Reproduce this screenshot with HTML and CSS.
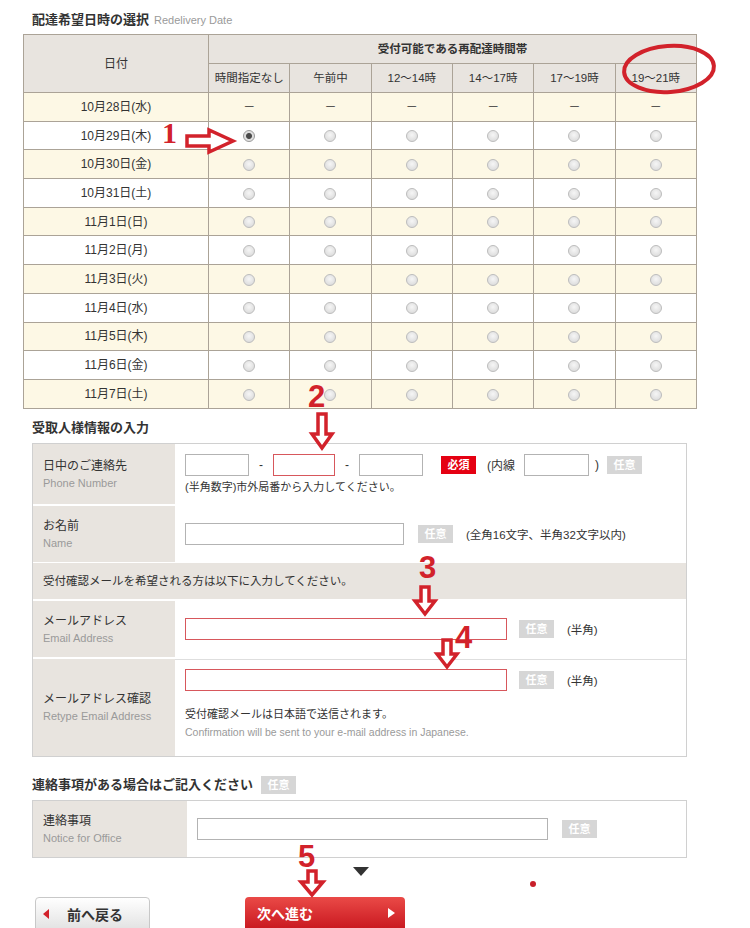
FILE: index.html
```html
<!DOCTYPE html>
<html lang="ja">
  <head>
    <meta charset="UTF-8" />
    <title>再配達受付 | 配達希望日時の選択</title>
    <link rel="stylesheet" href="styles.css">
  </head>
  <body>
    <main class="page">
      <h2 class="sec-title">配達希望日時の選択 <span class="sec-sub">Redelivery Date</span></h2>

      <table class="slots">
        <thead>
          <tr>
            <th rowspan="2" class="col-date">日付</th>
            <th colspan="6" class="slots-caption">受付可能である再配達時間帯</th>
          </tr>
          <tr>
            <th>時間指定なし</th>
            <th>午前中</th>
            <th>12～14時</th>
            <th>14～17時</th>
            <th>17～19時</th>
            <th>19～21時</th>
          </tr>
        </thead>
        <tbody>
          <tr>
            <td>10月28日(水)</td>
            <td>－</td><td>－</td><td>－</td><td>－</td><td>－</td><td>－</td>
          </tr>
          <tr>
            <td>10月29日(木)</td>
            <td><span class="radio is-checked"></span></td><td><span class="radio"></span></td><td><span class="radio"></span></td><td><span class="radio"></span></td><td><span class="radio"></span></td><td><span class="radio"></span></td>
          </tr>
          <tr>
            <td>10月30日(金)</td>
            <td><span class="radio"></span></td><td><span class="radio"></span></td><td><span class="radio"></span></td><td><span class="radio"></span></td><td><span class="radio"></span></td><td><span class="radio"></span></td>
          </tr>
          <tr>
            <td>10月31日(土)</td>
            <td><span class="radio"></span></td><td><span class="radio"></span></td><td><span class="radio"></span></td><td><span class="radio"></span></td><td><span class="radio"></span></td><td><span class="radio"></span></td>
          </tr>
          <tr>
            <td>11月1日(日)</td>
            <td><span class="radio"></span></td><td><span class="radio"></span></td><td><span class="radio"></span></td><td><span class="radio"></span></td><td><span class="radio"></span></td><td><span class="radio"></span></td>
          </tr>
          <tr>
            <td>11月2日(月)</td>
            <td><span class="radio"></span></td><td><span class="radio"></span></td><td><span class="radio"></span></td><td><span class="radio"></span></td><td><span class="radio"></span></td><td><span class="radio"></span></td>
          </tr>
          <tr>
            <td>11月3日(火)</td>
            <td><span class="radio"></span></td><td><span class="radio"></span></td><td><span class="radio"></span></td><td><span class="radio"></span></td><td><span class="radio"></span></td><td><span class="radio"></span></td>
          </tr>
          <tr>
            <td>11月4日(水)</td>
            <td><span class="radio"></span></td><td><span class="radio"></span></td><td><span class="radio"></span></td><td><span class="radio"></span></td><td><span class="radio"></span></td><td><span class="radio"></span></td>
          </tr>
          <tr>
            <td>11月5日(木)</td>
            <td><span class="radio"></span></td><td><span class="radio"></span></td><td><span class="radio"></span></td><td><span class="radio"></span></td><td><span class="radio"></span></td><td><span class="radio"></span></td>
          </tr>
          <tr>
            <td>11月6日(金)</td>
            <td><span class="radio"></span></td><td><span class="radio"></span></td><td><span class="radio"></span></td><td><span class="radio"></span></td><td><span class="radio"></span></td><td><span class="radio"></span></td>
          </tr>
          <tr>
            <td>11月7日(土)</td>
            <td><span class="radio"></span></td><td><span class="radio"></span></td><td><span class="radio"></span></td><td><span class="radio"></span></td><td><span class="radio"></span></td><td><span class="radio"></span></td>
          </tr>
        </tbody>
      </table>

      <h2 class="sec-title sec-title--form">受取人様情報の入力</h2>
      <section class="form-box">
        <div class="row row--phone">
          <div class="label">
            <p class="label-ja">日中のご連絡先</p>
            <p class="label-en">Phone Number</p>
          </div>
          <div class="field">
            <div class="line">
              <input class="txt tel-1" type="text" />
              <span class="sep">-</span>
              <input class="txt txt--alert tel-2" type="text" />
              <span class="sep">-</span>
              <input class="txt tel-3" type="text" />
              <span class="badge badge--req">必須</span>
              <span class="ext">(内線</span>
              <input class="txt tel-ext" type="text" />
              <span class="paren">)</span>
              <span class="badge badge--opt">任意</span>
            </div>
            <p class="note">(半角数字)市外局番から入力してください。</p>
          </div>
        </div>

        <div class="row row--name">
          <div class="label">
            <p class="label-ja">お名前</p>
            <p class="label-en">Name</p>
          </div>
          <div class="field">
            <div class="line">
              <input class="txt name" type="text" />
              <span class="badge badge--opt">任意</span>
              <span class="hint">(全角16文字、半角32文字以内)</span>
            </div>
          </div>
        </div>

        <div class="row-notice">受付確認メールを希望される方は以下に入力してください。</div>

        <div class="row row--mail">
          <div class="label">
            <p class="label-ja">メールアドレス</p>
            <p class="label-en">Email Address</p>
          </div>
          <div class="field">
            <div class="line">
              <input class="txt txt--alert mail" type="text" />
              <span class="badge badge--opt">任意</span>
              <span class="hint">(半角)</span>
            </div>
          </div>
        </div>

        <div class="row row--retype">
          <div class="label">
            <p class="label-ja">メールアドレス確認</p>
            <p class="label-en">Retype Email Address</p>
          </div>
          <div class="field field--top">
            <div class="line">
              <input class="txt txt--alert mail" type="text" />
              <span class="badge badge--opt">任意</span>
              <span class="hint">(半角)</span>
            </div>
            <p class="mail-note">受付確認メールは日本語で送信されます。</p>
            <p class="mail-note-en">Confirmation will be sent to your e-mail address in Japanese.</p>
          </div>
        </div>
      </section>

      <h2 class="sec-title sec-title--notice">連絡事項がある場合はご記入ください <span class="badge badge--opt">任意</span></h2>
      <section class="form-box form-box--notice">
        <div class="row">
          <div class="label">
            <p class="label-ja">連絡事項</p>
            <p class="label-en">Notice for Office</p>
          </div>
          <div class="field">
            <div class="line">
              <input class="txt office" type="text" />
              <span class="badge badge--opt">任意</span>
            </div>
          </div>
        </div>
      </section>

      <div class="down-hint"><span class="tri-down"></span></div>

      <nav class="nav">
        <a class="btn btn--back" href="#"><span class="tri-left"></span>前へ戻る</a>
        <a class="btn btn--next" href="#">次へ進む<span class="tri-right"></span></a>
      </nav>

      <!-- annotations drawn over the page -->
      <svg class="mark mark--circle" width="100" height="58" viewBox="0 0 100 58">
        <ellipse cx="50" cy="29" rx="45" ry="23" transform="rotate(-4 50 29)" fill="none" stroke="#d2222b" stroke-width="4" />
      </svg>

      <span class="step step--1">1</span>
      <svg class="mark mark--right" width="50" height="26" viewBox="0 0 50 26">
        <path d="M2 8 H24 V2 L48 13 L24 24 V18 H2 Z" fill="#fff" stroke="#d2222b" stroke-width="3.5" stroke-linejoin="miter" />
      </svg>

      <span class="step step--2">2</span>
      <svg class="mark mark--down2" width="24" height="38" viewBox="0 0 24 38" preserveAspectRatio="none">
        <path d="M8 2 H16 V22 H22 L12 36 L2 22 H8 Z" fill="#fff" stroke="#d2222b" stroke-width="3.5" />
      </svg>

      <span class="step step--3">3</span>
      <svg class="mark mark--down3" width="24" height="31" viewBox="0 0 24 31" preserveAspectRatio="none">
        <path d="M8 2 H16 V16 H22 L12 29 L2 16 H8 Z" fill="#fff" stroke="#d2222b" stroke-width="3.5" />
      </svg>

      <span class="step step--4">4</span>
      <svg class="mark mark--down4" width="24" height="31" viewBox="0 0 24 31" preserveAspectRatio="none">
        <path d="M8 2 H16 V16 H22 L12 29 L2 16 H8 Z" fill="#fff" stroke="#d2222b" stroke-width="3.5" />
      </svg>

      <span class="step step--5">5</span>
      <svg class="mark mark--down5" width="28" height="28" viewBox="0 0 28 28" preserveAspectRatio="none">
        <path d="M10 2 H18 V13 H25 L14 26 L3 13 H10 Z" fill="#fff" stroke="#d2222b" stroke-width="3.5" />
      </svg>

      <span class="stray-dot"></span>
    </main>
  </body>
</html>
```

FILE: styles.css
```css
body {
  margin: 0;
  font-family: "Liberation Sans", "Noto Sans CJK JP", sans-serif;
  font-size: 12px;
  color: #333;
  background: #fff;
}

p {
  margin: 0;
}

.page {
  position: relative;
  width: 750px;
  padding-top: 12px;
}

.sec-title {
  display: flex;
  align-items: center;
  margin: 0 0 0 32px;
  font-size: 13px;
  line-height: 16px;
  font-weight: bold;
  color: #333;
}

.sec-sub {
  margin-left: 5px;
  font-size: 11px;
  font-weight: normal;
  color: #9a9a9a;
}

.sec-title--form {
  margin-top: 11px;
}

.sec-title--notice {
  margin-top: 19px;
}

.sec-title--notice .badge {
  margin-left: 8px;
}

/* delivery slots */

.slots {
  margin: 6px 0 0 23px;
  width: 674px;
  border-collapse: collapse;
  table-layout: fixed;
}

.slots th,
.slots td {
  height: 27.7px;
  padding: 0;
  border: 1px solid #aba397;
  text-align: center;
  font-size: 11.5px;
  font-weight: normal;
  line-height: 14px;
  color: #333;
}

.slots th {
  height: 28px;
  background: #e8e4df;
}

.slots .col-date {
  width: 184px;
  font-size: 12px;
}

.slots .slots-caption {
  font-weight: bold;
}

.slots td {
  background: #fff;
  font-size: 12px;
}

.slots tbody tr:nth-child(odd) td {
  background: #fdf8e5;
}

.radio {
  display: inline-block;
  width: 10px;
  height: 10px;
  border: 1px solid #bdbdbd;
  border-radius: 50%;
  background: radial-gradient(circle at 50% 40%, #f6f6f6, #d6d6d6);
  vertical-align: middle;
}

.radio.is-checked {
  background: radial-gradient(circle, #4a4a4a 0 2.5px, #dcdcdc 3.5px, #eeeeee);
  border-color: #9a9a9a;
}

/* form boxes */

.form-box {
  box-sizing: border-box;
  width: 655px;
  margin: 7px 0 0 32px;
  border: 1px solid #d0d0d0;
  background: #fff;
}

.row {
  display: grid;
  grid-template-columns: 142px 1fr;
}

.row + .row,
.row-notice + .row {
  margin-top: 2px;
}

.row--phone { height: 60px; }
.row--name { height: 56px; }
.row--mail { height: 56px; }
.row--retype { height: 97px; margin-top: 1px; }

.row--retype .field {
  border-top: 1px solid #dedede;
}

.label {
  display: flex;
  flex-direction: column;
  justify-content: center;
  padding-left: 10px;
  background: #e8e4df;
}

.label-ja {
  font-size: 12px;
  line-height: 18px;
  color: #333;
}

.label-en {
  margin-top: 1px;
  font-size: 11px;
  line-height: 15px;
  color: #9a9a9a;
}

.field {
  display: flex;
  flex-direction: column;
  justify-content: center;
  padding-left: 10px;
}

.field--top {
  justify-content: flex-start;
  padding-top: 9px;
}

.line {
  display: flex;
  align-items: center;
}

.txt {
  box-sizing: border-box;
  height: 22px;
  margin: 0;
  padding: 0 4px;
  border: 1px solid #b3b3b3;
  background: #fff;
  font: inherit;
}

.txt--alert {
  border-color: #d7575c;
}

.tel-1 { width: 64px; }
.tel-2 { width: 62px; }
.tel-3 { width: 64px; }
.tel-ext { width: 65px; margin-left: 9px; }
.name { width: 219px; }
.mail { width: 322px; }
.office { width: 351px; }

.sep {
  margin: 0 10px;
  font-size: 12px;
}

.ext {
  margin-left: 11px;
  font-size: 12px;
}

.paren {
  margin-left: 6px;
  margin-right: 8px;
}

.badge {
  display: inline-block;
  width: 35px;
  height: 18px;
  line-height: 18px;
  text-align: center;
  font-size: 11px;
  font-weight: bold;
  color: #fff;
  background: #d6d6d6;
}

.badge--req {
  margin-left: 18px;
  background: #e50012;
}

.name + .badge { margin-left: 14px; }
.mail + .badge { margin-left: 12px; }
.office + .badge { margin-left: 14px; }

.hint {
  margin-left: 13px;
  font-size: 11.5px;
}

.note {
  margin-top: 4px;
  font-size: 11px;
  line-height: 14px;
}

.row-notice {
  margin-top: 1px;
  height: 36px;
  padding-left: 10px;
  background: #e8e4df;
  font-size: 11.5px;
  line-height: 36px;
}

.mail-note {
  margin-top: 15px;
  font-size: 11px;
  line-height: 16px;
}

.mail-note-en {
  margin-top: 3px;
  font-size: 10.5px;
  line-height: 14px;
  color: #9a9a9a;
}

.form-box--notice {
  margin-top: 6px;
}

.form-box--notice .row {
  height: 56px;
  grid-template-columns: 154px 1fr;
}

/* navigation */

.down-hint {
  margin: 9px 0 0 353px;
  height: 9px;
}

.tri-down {
  display: block;
  width: 0;
  height: 0;
  border-left: 8px solid transparent;
  border-right: 8px solid transparent;
  border-top: 9px solid #333;
}

.nav {
  display: flex;
  margin-top: 21px;
  padding-left: 35px;
}

.btn {
  box-sizing: border-box;
  display: flex;
  align-items: flex-start;
  height: 36px;
  padding-top: 6px;
  border-radius: 4px 4px 0 0;
  font-family: "Noto Sans CJK JP", sans-serif;
  font-size: 14px;
  line-height: 20px;
  font-weight: bold;
  text-decoration: none;
}

.btn--back {
  width: 115px;
  padding-left: 7px;
  border: 1px solid #c8c8c8;
  background: linear-gradient(#ffffff, #e0e0e0);
  color: #333;
}

.tri-left {
  width: 0;
  height: 0;
  margin: 5px 18px 0 0;
  border-top: 5px solid transparent;
  border-bottom: 5px solid transparent;
  border-right: 6px solid #d2222b;
}

.btn--next {
  width: 160px;
  margin-left: 95px;
  padding-left: 12px;
  padding-right: 10px;
  justify-content: space-between;
  background: linear-gradient(#ea4a47, #c5121b);
  color: #fff;
}

.tri-right {
  width: 0;
  height: 0;
  margin-top: 5px;
  border-top: 5px solid transparent;
  border-bottom: 5px solid transparent;
  border-left: 7px solid #fff;
}

/* annotations */

.mark {
  position: absolute;
  overflow: visible;
}

.mark--circle { left: 619px; top: 40px; }
.mark--right { left: 185px; top: 128px; }
.mark--down2 { left: 310px; top: 412px; }
.mark--down3 { left: 413px; top: 585px; }
.mark--down4 { left: 435px; top: 638px; }
.mark--down5 { left: 298px; top: 869px; }

.step {
  position: absolute;
  font-family: "Liberation Sans", sans-serif;
  font-weight: bold;
  font-size: 31px;
  line-height: 31px;
  color: #d2222b;
}

.step--1 {
  left: 162px;
  top: 117px;
  font-family: "Liberation Serif", serif;
  font-size: 30px;
}

.step--2 { left: 308px; top: 381px; }
.step--3 { left: 419px; top: 552px; }
.step--4 { left: 455px; top: 622px; }
.step--5 { left: 298px; top: 841px; }

.stray-dot {
  position: absolute;
  left: 530px;
  top: 881px;
  width: 6px;
  height: 6px;
  border-radius: 50%;
  background: #c8202a;
}
```
